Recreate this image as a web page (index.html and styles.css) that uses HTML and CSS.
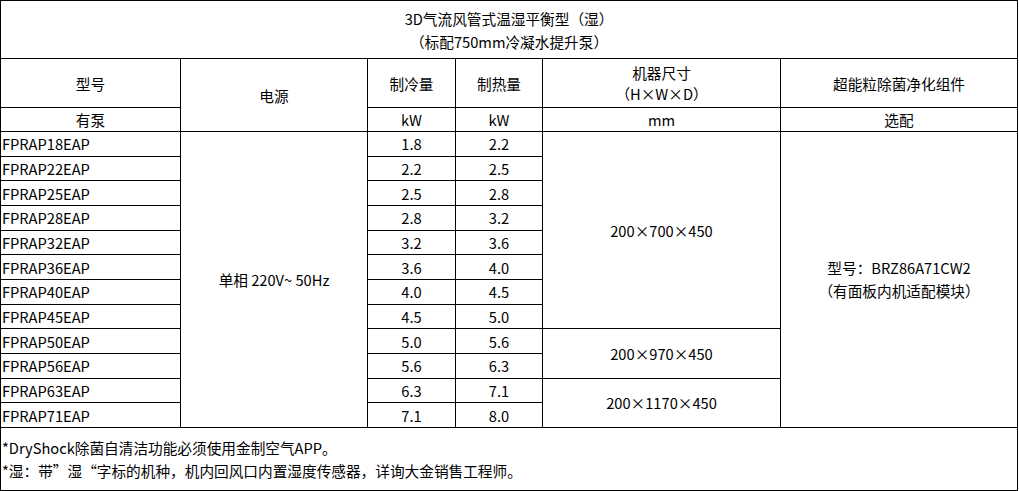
FILE: index.html
```html
<!DOCTYPE html>
<html lang="zh-CN">
<head>
<meta charset="utf-8">
<title>3D气流风管式温湿平衡型（湿）</title>
<link rel="stylesheet" href="styles.css">
</head>
<body>
<table class="spec">
  <colgroup>
    <col class="c-model">
    <col class="c-power">
    <col class="c-cool">
    <col class="c-heat">
    <col class="c-size">
    <col class="c-filter">
  </colgroup>
  <thead>
    <tr class="r-title">
      <th colspan="6" class="title">3D气流风管式温湿平衡型（湿）<br>（标配750mm冷凝水提升泵）</th>
    </tr>
    <tr class="r-head1">
      <th>型号</th>
      <th rowspan="2">电源</th>
      <th>制冷量</th>
      <th>制热量</th>
      <th class="tight">机器尺寸<br>（H×W×D）</th>
      <th>超能粒除菌净化组件</th>
    </tr>
    <tr class="r-head2">
      <th>有泵</th>
      <th>kW</th>
      <th>kW</th>
      <th>mm</th>
      <th>选配</th>
    </tr>
  </thead>
  <tbody>
    <tr class="r-data">
      <td class="model">FPRAP18EAP</td>
      <td rowspan="12">单相 220V~ 50Hz</td>
      <td>1.8</td>
      <td>2.2</td>
      <td rowspan="8">200×700×450</td>
      <td rowspan="12" class="filter">型号：BRZ86A71CW2<br>（有面板内机适配模块）</td>
    </tr>
    <tr class="r-data"><td class="model">FPRAP22EAP</td><td>2.2</td><td>2.5</td></tr>
    <tr class="r-data"><td class="model">FPRAP25EAP</td><td>2.5</td><td>2.8</td></tr>
    <tr class="r-data"><td class="model">FPRAP28EAP</td><td>2.8</td><td>3.2</td></tr>
    <tr class="r-data"><td class="model">FPRAP32EAP</td><td>3.2</td><td>3.6</td></tr>
    <tr class="r-data"><td class="model">FPRAP36EAP</td><td>3.6</td><td>4.0</td></tr>
    <tr class="r-data"><td class="model">FPRAP40EAP</td><td>4.0</td><td>4.5</td></tr>
    <tr class="r-data"><td class="model">FPRAP45EAP</td><td>4.5</td><td>5.0</td></tr>
    <tr class="r-data">
      <td class="model">FPRAP50EAP</td><td>5.0</td><td>5.6</td>
      <td rowspan="2">200×970×450</td>
    </tr>
    <tr class="r-data"><td class="model">FPRAP56EAP</td><td>5.6</td><td>6.3</td></tr>
    <tr class="r-data">
      <td class="model">FPRAP63EAP</td><td>6.3</td><td>7.1</td>
      <td rowspan="2">200×1170×450</td>
    </tr>
    <tr class="r-data"><td class="model">FPRAP71EAP</td><td>7.1</td><td>8.0</td></tr>
  </tbody>
  <tfoot>
    <tr class="r-foot">
      <td colspan="6" class="note">*DryShock除菌自清洁功能必须使用金制空气APP。<br>*湿：带”湿“字标的机种，机内回风口内置湿度传感器，详询大金销售工程师。</td>
    </tr>
  </tfoot>
</table>
</body>
</html>
```
FILE: styles.css
```css
html, body {
  margin: 0;
  padding: 0;
  background: #fff;
}

body {
  font-family: "Noto Sans CJK SC", "Noto Sans", sans-serif;
  font-size: 14.67px;
  color: #000;
}

.spec {
  border-collapse: collapse;
  table-layout: fixed;
  width: 1018px;
}

.c-model { width: 180px; }
.c-power { width: 187px; }
.c-cool { width: 88px; }
.c-heat { width: 87px; }
.c-size { width: 238px; }
.c-filter { width: 237px; }

.spec th,
.spec td {
  border: 1px solid #000;
  padding: 0;
  text-align: center;
  vertical-align: middle;
  font-weight: normal;
  line-height: 23px;
}

.r-title { height: 58px; }
.r-head1 { height: 49px; }
.r-head2 { height: 24px; }
.r-data { height: 24.67px; }
.r-foot { height: 63px; }

.spec .tight { line-height: 21.5px; }

.spec td.model {
  text-align: left;
  padding-left: 1px;
}

.spec td.note {
  text-align: left;
  padding-left: 1px;
}
```
